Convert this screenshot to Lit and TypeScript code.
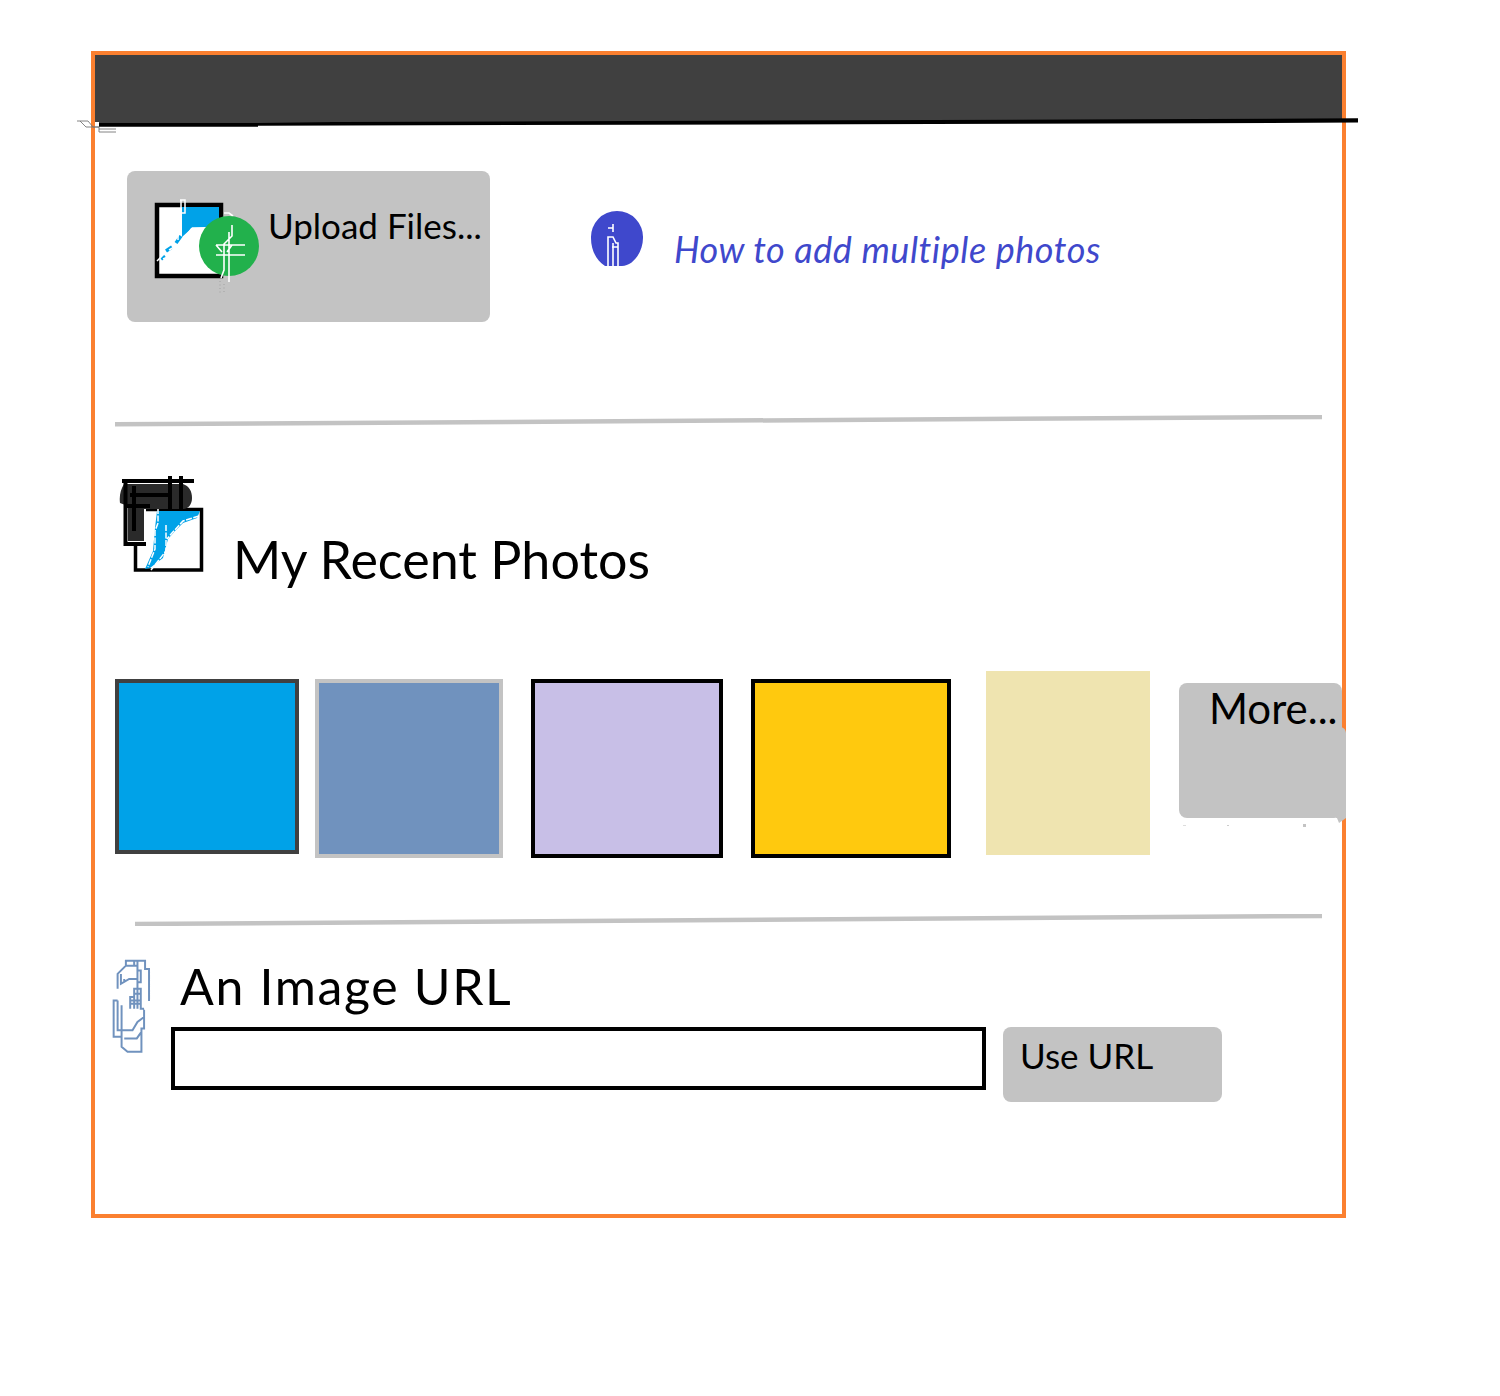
import { LitElement, html, css, svg } from "lit";
import { customElement } from "lit/decorators.js";

const uploadIcon = svg`<svg class="up-icon" viewBox="150 198 112 100" width="112" height="100">
  <rect x="157" y="205" width="64" height="71" fill="#fff" stroke="#000" stroke-width="4.5"/>
  <path d="M182 207H219V226L192 228L182 237Z" fill="#00a2e8"/>
  <path d="M181 236L176 243M172 247L166 251M165 256L161 259" fill="none" stroke="#00a2e8" stroke-width="3.5"/>
  <path d="M180 200H185V213H181M181 200V232M192 228H205M192 228L186 236L178 245L169 250M178 233V240M166 252L157 261M170 256L163 259" fill="none" stroke="#fff" stroke-width="1.5"/>
  <path d="M224 213H229L233 216" fill="none" stroke="#fff" stroke-width="1.6"/>
  <circle cx="229" cy="246" r="30" fill="#22b14c"/>
  <path d="M232 225V236L224 244V270L221 278M229 232V282M216 245H245M216 255H245M216 245L222 252M232 245L227 252" fill="none" stroke="#fff" stroke-width="1.6"/>
  <path d="M220 281V294M224 284V292" fill="none" stroke="#aaa" stroke-width="1.3" stroke-dasharray="1 2.5"/>
</svg>`;

const infoIcon = svg`<svg class="info-icon" viewBox="588 208 58 62" width="58" height="62">
  <path d="M617 211A26 26 0 0 1 643 238C643 252 633 266 622 266H605C596 260 591 250 591 238A26 26 0 0 1 617 211Z" fill="#3f48cc"/>
  <path d="M608 228H613M613 224V232M608 266V237H613L616 243H618V266M613 243V266M612 247H618" fill="none" stroke="#fff" stroke-width="1.6"/>
</svg>`;

const recentIcon = svg`<svg class="recent-icon" viewBox="118 473 88 101" width="88" height="101">
  <path d="M146 508.500H201.500V569H135.500V544" fill="none" stroke="#000" stroke-width="3.500"/>
  <path d="M157 510H200L197 517L183 522L175 530L168 538L163 557L150 567L145 568L153 550L155 527Z" fill="#00a2e8"/>
  <path d="M158 507V522L155 530V548L148 566M166 524V550L151 569M199 515L183 520L172 532L167 538M197 522L183 530L170 544L164 558" fill="none" stroke="#fff" stroke-width="1.500" stroke-dasharray="6 1.500"/>
  <path d="M124 483H183C189 485 192 490 192 497C192 503 189 507 184 508H144V540H128V505L120 502C119 494 121 488 124 483Z" fill="#2a2a2a"/>
  <path d="M122 480H194M170 475V508M181 475V508M125.500 480V543H146M130 494H168M134 485V530M124 505H150" fill="none" stroke="#000" stroke-width="4"/>
</svg>`;

const linkIcon = svg`<svg class="link-icon" viewBox="30 20 130 300" width="43" height="100">
  <path d="M145 152V55H133V30H75V45L50 70V115M60 70V100L85 85H110M70 85V95M75 45H110M100 30V45M110 30V175M110 60H120V95H110M88 175V140H100V115H120V175H130M100 140V175M88 150H120M100 130H120M88 160H120M50 150H38V260H62M50 150V240H62M62 165V290L80 305H122V235H130V178M62 240H95L110 215L130 200M70 265H108L122 245" fill="none" stroke="#7092be" stroke-width="6"/>
</svg>`;

const overlay = svg`<svg class="overlay" viewBox="70 110 1300 30" width="1300" height="30">
  <path d="M99 122.300H258L1200 119L1358 118.300V122.500L1200 123.200L258 125.800V126.700H99Z" fill="#000"/>
  <path d="M77 121H88L93 127H99V132H116M80 121L86 127H99M99 129H116" fill="none" stroke="#777" stroke-width="0.9"/>
</svg>`;

const specks = svg`<svg class="specks" viewBox="0 0 170 12" width="170" height="12">
  <path d="M158 0H167L160 5Z" fill="#c3c3c3"/>
  <rect x="4" y="7" width="3" height="1" fill="#ddd"/>
  <rect x="48" y="7" width="2" height="1" fill="#ccc"/>
  <rect x="124" y="6" width="3" height="3" fill="#c3c3c3"/>
</svg>`;

@customElement("app-root")
export class AppRoot extends LitElement {
  static styles = css`
    :host {
      display: block;
      height: 1396px;
      box-sizing: border-box;
      padding: 51px 0 0 91px;
      background: #fff;
      font-family: "Lato", "Noto Sans", sans-serif;
      color: #000;
    }
    .frame {
      position: relative;
      box-sizing: border-box;
      width: 1255px;
      height: 1167px;
      border: 4px solid #fb8030;
    }
    .overlay { position: absolute; left: -25px; top: 55px; pointer-events: none; }
    .header { height: 67px; background: #404040; }
    svg { display: block; flex: none; }

    .upload-row { display: flex; align-items: flex-start; margin: 49px 0 0 32px; }
    .upload-btn {
      display: flex; align-items: flex-start;
      width: 363px; height: 151px; box-sizing: border-box;
      background: #c3c3c3; border-radius: 8px;
      padding: 27px 0 0 23px;
    }
    .upload-label { font-size: 35px; line-height: 54px; margin-left: 6px; white-space: nowrap; }
    .help { display: flex; align-items: flex-start; margin: 37px 0 0 98px; }
    .help-link {
      font-size: 36px; line-height: 50px; font-style: italic; color: #3f48cc;
      margin: 16px 0 0 28px; white-space: nowrap; letter-spacing: 0.55px;
    }

    .rule line { stroke: #c3c3c3; stroke-width: 4.5; }
    .rule.a { margin: 93px 0 0 20px; }
    .rule.b { margin: 56px 0 0 40px; }

    .recent-head { display: flex; align-items: flex-start; margin: 47px 0 0 23px; }
    .recent-title { font-size: 52px; line-height: 70px; margin: 50px 0 0 27px; white-space: nowrap; }

    .photos { display: flex; align-items: flex-start; margin: 77px 0 0 20px; height: 187px; }
    .ph { box-sizing: border-box; border: 4px solid #000; flex: none; margin-top: 8px; }
    .p1 { width: 184px; height: 175px; background: #00a2e8; border-color: #404040; margin-right: 16px; }
    .p2 { width: 188px; height: 179px; background: #7092be; border-color: #c3c3c3; margin-right: 28px; }
    .p3 { width: 192px; height: 179px; background: #c8bfe7; margin-right: 28px; }
    .p4 { width: 200px; height: 179px; background: #ffc90e; margin-right: 35px; }
    .p5 { width: 164px; height: 184px; background: #efe4b0; border: 0; margin-top: 0; margin-right: 29px; }
    .more {
      position: relative; flex: none; box-sizing: border-box;
      width: 163px; height: 135px; margin-top: 12px;
      background: #c3c3c3; border-radius: 8px;
      padding-left: 30px;
      font-size: 42px; line-height: 50px; white-space: nowrap;
    }
    .more::after {
      content: ""; position: absolute; right: -4px; top: 44px;
      width: 10px; height: 91px; background: #c3c3c3; border-top-right-radius: 6px;
    }
    .specks { position: absolute; left: 0; top: 135px; z-index: 1; }

    .url { display: flex; align-items: flex-start; margin: 31px 0 0 16px; }
    .url-body { margin-left: 17px; }
    .url-title { font-size: 50px; line-height: 58px; margin-left: 9px; white-space: nowrap; letter-spacing: 1.65px; }
    .url-row { display: flex; align-items: flex-start; gap: 17px; margin-top: 12px; }
    .url-input {
      box-sizing: border-box; width: 815px; height: 63px;
      border: 4px solid #000; background: #fff;
    }
    .url-btn {
      box-sizing: border-box; width: 219px; height: 75px;
      background: #c3c3c3; border-radius: 8px; padding: 5px 0 0 17px;
      font-size: 35px; line-height: 46px; white-space: nowrap;
    }
  `;

  render() {
    return html`
      <div class="frame">
        <div class="header"></div>
        ${overlay}
        <div class="upload-row">
          <div class="upload-btn">
            ${uploadIcon}
            <span class="upload-label">Upload Files...</span>
          </div>
          <div class="help">
            ${infoIcon}
            <span class="help-link">How to add multiple photos</span>
          </div>
        </div>
        <svg class="rule a" width="1207" height="12" viewBox="0 0 1207 12"><line x1="0" y1="9.300" x2="1207" y2="2"></line></svg>
        <div class="recent-head">
          ${recentIcon}
          <span class="recent-title">My Recent Photos</span>
        </div>
        <div class="photos">
          <div class="ph p1"></div>
          <div class="ph p2"></div>
          <div class="ph p3"></div>
          <div class="ph p4"></div>
          <div class="ph p5"></div>
          <div class="more">More...${specks}</div>
        </div>
        <svg class="rule b" width="1187" height="12" viewBox="0 0 1187 12"><line x1="0" y1="10" x2="1187" y2="2"></line></svg>
        <div class="url">
          ${linkIcon}
          <div class="url-body">
            <div class="url-title">An Image URL</div>
            <div class="url-row">
              <div class="url-input"></div>
              <div class="url-btn">Use URL</div>
            </div>
          </div>
        </div>
      </div>
    `;
  }
}
